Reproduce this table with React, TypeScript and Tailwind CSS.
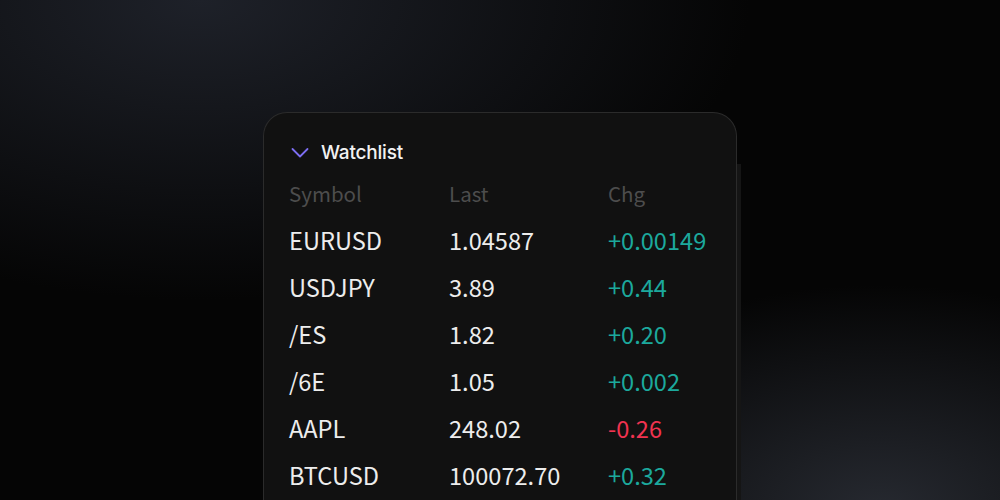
import React from "react";

const rows = [
  { s: "EURUSD", l: "1.04587", c: "+0.00149", up: true },
  { s: "USDJPY", l: "3.89", c: "+0.44", up: true },
  { s: "/ES", l: "1.82", c: "+0.20", up: true },
  { s: "/6E", l: "1.05", c: "+0.002", up: true },
  { s: "AAPL", l: "248.02", c: "-0.26", up: false },
  { s: "BTCUSD", l: "100072.70", c: "+0.32", up: true },
];

export default function App() {
  return (
    <div className="w-[1000px] h-[500px] overflow-hidden bg-[#050505] bg-[image:radial-gradient(ellipse_55%_60%_at_20%_0%,#1e2129_0%,transparent_100%),radial-gradient(ellipse_38%_45%_at_88%_102%,#262930_0%,transparent_100%)] flex justify-center pt-[112px]">
      <div className="flex items-start ml-[4px]">
        <div className="w-[474px] h-[420px] rounded-tl-[24px] rounded-tr-[24px] bg-[#111111] border-t border-l border-r border-[#2b2b2b] pl-[25px] pt-[28px]">
          <div className="flex items-center h-[24px]">
            <svg width="18" height="12" viewBox="0 0 18 12" className="ml-[2px]">
              <path d="M1.5 2 L9 9.5 L16.5 2" fill="none" stroke="#7d6ef2" strokeWidth="1.8" strokeLinecap="round" strokeLinejoin="round" />
            </svg>
            <span className="ml-[12px] text-[19px] font-medium text-[#f2f2f2] tracking-[-0.2px]" style={{ fontFamily: "Inter, 'Noto Sans', sans-serif" }}>
              Watchlist
            </span>
          </div>
          <div style={{ fontFamily: "'Noto Sans CJK SC', 'Noto Sans', sans-serif" }}>
            <div className="grid grid-cols-[160px_159px_1fr] h-[47px] items-center mt-[5px] text-[20.5px] text-[#4d4d4d]">
              <span>Symbol</span>
              <span>Last</span>
              <span>Chg</span>
            </div>
            {rows.map((r) => (
              <div key={r.s} className="grid grid-cols-[160px_159px_1fr] h-[47px] items-center text-[23.6px] text-[#ededed]">
                <span>{r.s}</span>
                <span>{r.l}</span>
                <span className={r.up ? "text-[#1ca99d]" : "text-[#f03350]"}>{r.c}</span>
              </div>
            ))}
          </div>
        </div>
        <div className="w-[4px] h-[360px] mt-[52px] bg-[#151515]" />
      </div>
    </div>
  );
}
